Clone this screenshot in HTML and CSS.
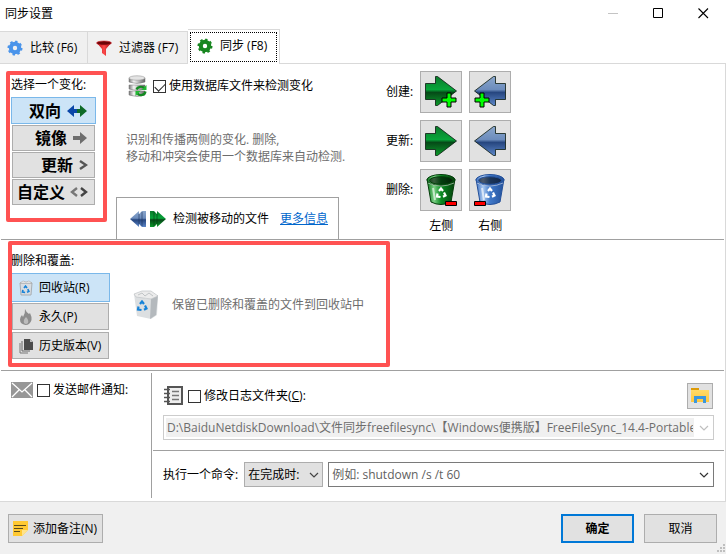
FILE: index.html
```html
<!DOCTYPE html>
<html lang="zh-CN">
<head>
    <meta charset="UTF-8">
    <meta name="viewport" content="width=device-width, initial-scale=1.0">
    <title>同步设置</title>
    <link rel="stylesheet" href="styles.css">
</head>
<body>
    <!-- shared icon shapes -->
    <svg class="defs" width="0" height="0" aria-hidden="true">
        <defs>
            <linearGradient id="green" x1="0" y1="0" x2="0" y2="1">
                <stop offset="0" stop-color="#0b7a2c"/>
                <stop offset="0.45" stop-color="#07a53a"/>
                <stop offset="0.55" stop-color="#064a18"/>
                <stop offset="1" stop-color="#0a9a2a"/>
            </linearGradient>
            <linearGradient id="blue" x1="0" y1="0" x2="0" y2="1">
                <stop offset="0" stop-color="#8aa6cc"/>
                <stop offset="0.45" stop-color="#6c8cbc"/>
                <stop offset="0.55" stop-color="#26467f"/>
                <stop offset="1" stop-color="#5c86c8"/>
            </linearGradient>
            <linearGradient id="green-bin" x1="0" y1="0" x2="1" y2="0">
                <stop offset="0" stop-color="#0a7a1c"/>
                <stop offset="0.25" stop-color="#7ccf85"/>
                <stop offset="0.5" stop-color="#0a8a22"/>
                <stop offset="1" stop-color="#04400c"/>
            </linearGradient>
            <linearGradient id="blue-bin" x1="0" y1="0" x2="1" y2="0">
                <stop offset="0" stop-color="#3a6fc0"/>
                <stop offset="0.25" stop-color="#a9c8f0"/>
                <stop offset="0.5" stop-color="#3f78c8"/>
                <stop offset="1" stop-color="#24529c"/>
            </linearGradient>
            <linearGradient id="metal" x1="0" y1="0" x2="1" y2="0">
                <stop offset="0" stop-color="#777"/>
                <stop offset="0.3" stop-color="#f4f4f4"/>
                <stop offset="1" stop-color="#666"/>
            </linearGradient>
            <linearGradient id="red" x1="0" y1="0" x2="1" y2="0">
                <stop offset="0" stop-color="#b00b14"/>
                <stop offset="0.5" stop-color="#ff4a4a"/>
                <stop offset="1" stop-color="#9c0810"/>
            </linearGradient>
            <linearGradient id="folder" x1="0" y1="0" x2="0" y2="1">
                <stop offset="0" stop-color="#ffdc6c"/>
                <stop offset="1" stop-color="#ffc83c"/>
            </linearGradient>
            <symbol id="gear" viewBox="0 0 16 16">
                <circle cx="8" cy="8" r="6" fill="none" stroke="currentColor" stroke-width="3" pathLength="16" stroke-dasharray="1 1"/>
                <circle cx="8" cy="8" r="4.200" fill="none" stroke="currentColor" stroke-width="4"/>
            </symbol>
            <symbol id="arrow" viewBox="0 0 34 32">
                <path d="M1.500 8.500H11.500V1.500H13.500L32.500 16L13.500 30.500H11.500V24.500H1.500Z" stroke="#0a1a10" stroke-opacity="0.800" stroke-linejoin="round"/>
            </symbol>
            <symbol id="plus" viewBox="0 0 16 16">
                <path d="M6 1h4v5h5v4h-5v5H6v-5H1V6h5z" fill="#0f0" stroke="#000"/>
            </symbol>
            <symbol id="recycle" viewBox="0 0 12 12">
                <path d="M4 4L6 1.500L8 4M9 5.500L10.500 8.500L8 9.800M5.500 10L2 9.500L2.500 6.500" fill="none" stroke="currentColor" stroke-width="2.200"/>
            </symbol>
            <symbol id="bucket" viewBox="0 0 32 34">
                <path d="M2 6L6 29Q16 34 26 29L30 6Z"/>
                <ellipse cx="16" cy="7" rx="14" ry="5.500"/>
                <ellipse cx="16" cy="7.500" rx="11.500" ry="3.800" fill="#000" fill-opacity="0.550"/>
                <path d="M3 10Q16 16 29 10" fill="none" stroke="#fff" stroke-opacity="0.500"/>
                <path d="M8 15L10 27" fill="none" stroke="#fff" stroke-opacity="0.600" stroke-width="2"/>
            </symbol>
            <symbol id="chevron" viewBox="0 0 10 6">
                <path d="M1 1L5 5L9 1" fill="none" stroke="currentColor" stroke-width="1.200"/>
            </symbol>
        </defs>
    </svg>

    <header class="titlebar">
        <h1>同步设置</h1>
        <div class="window-buttons">
            <button type="button" aria-label="最小化" disabled><svg width="11" height="11"><path d="M0 5.500h10" stroke="#c4c4c4"/></svg></button>
            <button type="button" aria-label="最大化"><svg width="11" height="11"><path d="M.5.5h9v9h-9z" fill="none" stroke="#000"/></svg></button>
            <button type="button" aria-label="关闭"><svg width="11" height="11"><path d="M.5.5l9.500 9.500M10 .5L.5 10" stroke="#000" stroke-width="1.100"/></svg></button>
        </div>
    </header>

    <nav class="tabs">
        <button type="button" class="tab tab-compare">
            <svg class="blue-gear" width="16" height="16"><use href="#gear"/></svg>
            比较 (F6)
        </button>
        <button type="button" class="tab tab-filter">
            <svg width="16" height="16" viewBox="0 0 16 16"><path d="M1 3L6 9V13L10 16V9L15 3Z" fill="url(#red)"/><ellipse cx="8" cy="3" rx="7.500" ry="2" fill="#6d0508" stroke="#d8232a" stroke-width=".6"/></svg>
            过滤器 (F7)
        </button>
        <button type="button" class="tab tab-sync active">
            <span class="focus">
                <svg class="green-gear" width="16" height="16"><use href="#gear"/></svg>
                同步 (F8)
            </span>
        </button>
    </nav>

    <main class="page">
        <section class="sync">
            <div class="variants">
                <div class="group-label">选择一个变化:</div>
                <button type="button" class="variant selected">双向
                    <svg width="22" height="14" viewBox="0 0 22 14"><path d="M11 5H8V1L1 7L8 13V9H11Z" fill="#0a46a8"/><path d="M11 5h3V1l7 6l-7 6V9h-3Z" fill="#0d6b28"/></svg>
                </button>
                <button type="button" class="variant">镜像
                    <svg width="16" height="14" viewBox="0 0 16 14"><path d="M1 5h7V1l7 6l-7 6V9H1Z" fill="#6e6e6e"/></svg>
                </button>
                <button type="button" class="variant">更新
                    <svg width="10" height="14" viewBox="0 0 10 14"><path d="M2 3L8 7L2 11" fill="none" stroke="#555" stroke-width="2.400"/></svg>
                </button>
                <button type="button" class="variant">自定义
                    <svg width="18" height="14" viewBox="0 0 18 14"><path d="M7 3L2 7L7 11" fill="none" stroke="#777" stroke-width="2.400"/><path d="M11 3L16 7L11 11" fill="none" stroke="#444" stroke-width="2.400"/></svg>
                </button>
            </div>

            <div class="detect">
                <div class="database">
                    <svg width="20" height="22" viewBox="0 0 20 22">
                        <path d="M1 3v4q8 3 16 0V3zM1 10v4q8 3 16 0v-4zM1 16v4q8 3 16 0v-4z" fill="url(#metal)" stroke="#777" stroke-width=".5"/>
                        <ellipse cx="9" cy="3" rx="8" ry="2.200" fill="#e4e4e4" stroke="#999" stroke-width=".6"/>
                        <path d="M8.500 14.500a4.500 4 0 0 1 8-1M17.500 16.500a4.500 4 0 0 1-8 2" fill="none" stroke="#128a20" stroke-width="2.200"/>
                        <path d="M18.500 10v5h-5zM7.500 21v-5h5z" fill="#22b934"/>
                    </svg>
                    <input type="checkbox" id="use-db" checked>
                    <label for="use-db">使用数据库文件来检测变化</label>
                </div>
                <p class="hint">识别和传播两侧的变化. 删除,<br>移动和冲突会使用一个数据库来自动检测.</p>
                <div class="moved">
                    <svg width="36" height="18" viewBox="0 0 36 18">
                        <path d="M9 1L0 9l9 8V14l3 3h4V1h-4L9 4Z" fill="url(#blue)"/>
                        <path d="M9 4V14M12 2V16" stroke="#1c335c" stroke-opacity=".6"/>
                        <path d="M27 1l9 8l-9 8V14l-3 3h-4V1h4l3 3Z" fill="url(#green)"/>
                        <path d="M27 4V14M24 2V16" stroke="#043d10" stroke-opacity=".6"/>
                    </svg>
                    <span>检测被移动的文件</span>
                    <a href="#more">更多信息</a>
                </div>
            </div>

            <div class="actions">
                <span class="action-label">创建:</span>
                <button type="button" class="action" aria-label="创建左侧">
                    <svg width="34" height="34" viewBox="0 0 34 34"><use href="#arrow" width="34" height="32" fill="url(#green)"/><use href="#plus" x="17" y="17" width="16" height="16"/></svg>
                </button>
                <button type="button" class="action" aria-label="创建右侧">
                    <svg width="34" height="34" viewBox="0 0 34 34"><g transform="matrix(-1 0 0 1 34 0)"><use href="#arrow" width="34" height="32" fill="url(#blue)"/></g><use href="#plus" x="1" y="17" width="16" height="16"/></svg>
                </button>
                <span class="action-label">更新:</span>
                <button type="button" class="action" aria-label="更新左侧">
                    <svg width="34" height="34" viewBox="0 0 34 34"><use href="#arrow" width="34" height="34" fill="url(#green)"/></svg>
                </button>
                <button type="button" class="action" aria-label="更新右侧">
                    <svg width="34" height="34" viewBox="0 0 34 34"><g transform="matrix(-1 0 0 1 34 0)"><use href="#arrow" width="34" height="34" fill="url(#blue)"/></g></svg>
                </button>
                <span class="action-label">删除:</span>
                <button type="button" class="action" aria-label="删除左侧">
                    <svg width="34" height="34" viewBox="0 0 34 34">
                        <use href="#bucket" x="1" width="32" height="34" fill="url(#green-bin)" stroke="#043d0b"/>
                        <use href="#recycle" class="white" x="11" y="14" width="12" height="12"/>
                        <path d="M21.500 28.500h11v4h-11z" fill="#f00" stroke="#000"/>
                    </svg>
                </button>
                <button type="button" class="action" aria-label="删除右侧">
                    <svg width="34" height="34" viewBox="0 0 34 34">
                        <use href="#bucket" x="1" width="32" height="34" fill="url(#blue-bin)" stroke="#24509a"/>
                        <use href="#recycle" class="white" x="11" y="14" width="12" height="12"/>
                        <path d="M1.500 28.500h11v4h-11z" fill="#f00" stroke="#000"/>
                    </svg>
                </button>
                <span></span>
                <span class="side">左侧</span>
                <span class="side">右侧</span>
            </div>
            <div class="mark mark-variants"></div>
        </section>

        <section class="deletion">
            <div class="methods">
                <div class="group-label">删除和覆盖:</div>
                <button type="button" class="method selected">
                    <svg width="14" height="16" viewBox="0 0 14 16"><path d="M1 3L2 15H12L13 3Z" fill="#d8dde2" stroke="#a8adb2"/><path d="M1 3L4 1L7 2L10 1L13 3Z" fill="#fff" stroke="#aaa" stroke-width=".7"/><use href="#recycle" class="recycle-blue" x="2" y="5" width="9" height="9"/></svg>
                    回收站(R)
                </button>
                <button type="button" class="method">
                    <svg width="14" height="16" viewBox="0 0 14 16"><path d="M6 0Q7 3 10 5L11 4Q13 8 12.500 11Q11 16 6.500 16Q1 15 1 10.500Q1 8 3 6L4 8Q6.500 4 6 0Z" fill="#8d8d8d"/><path d="M7 8Q10 11 9 14Q7 16 5 14Q4 11 7 8Z" fill="#bcbcbc"/></svg>
                    永久(P)
                </button>
                <button type="button" class="method">
                    <svg width="14" height="16" viewBox="0 0 14 16"><path d="M1 5V15H9" fill="none" stroke="#777"/><path d="M3 3V13H11" fill="none" stroke="#666"/><path d="M5 1H11L14 4V12H5Z" fill="#4c4c4c"/><path d="M11 1V4H14Z" fill="#bbb"/></svg>
                    历史版本(V)
                </button>
            </div>
            <div class="method-info">
                <svg width="26" height="30" viewBox="0 0 26 30">
                    <path d="M1 4L4 26L18 29L24 25L25 6L14 9Z" fill="#dcdfe1"/>
                    <path d="M18 9L25 5L23 25L17 29Z" fill="#b4b9bd"/>
                    <path d="M1 4L9 1L18 1L25 6L18 9L3 7Z" fill="#ececec" stroke="#bfc3c6" stroke-width=".7"/>
                    <path d="M5 5L9 3L12 6L16 3L20 6" fill="none" stroke="#c0c4c6"/>
                    <use href="#recycle" class="recycle-blue" x="3" y="10" width="12" height="12"/>
                </svg>
                <span>保留已删除和覆盖的文件到回收站中</span>
            </div>
            <div class="mark mark-deletion"></div>
        </section>

        <section class="extras">
            <div class="email">
                <svg width="22" height="16" viewBox="0 0 22 16"><path d="M0 0h22v16H0z" fill="#979797"/><path d="M1 1L11 10L21 1M1 15L8 8M21 15L14 8" fill="none" stroke="#fff" stroke-width="1.300"/></svg>
                <input type="checkbox" id="email">
                <label for="email">发送邮件通知:</label>
            </div>
            <div class="options">
                <div class="log">
                    <div class="log-head">
                        <svg width="20" height="20" viewBox="0 0 20 20"><path d="M4 1h14v17H4z" fill="#eee" stroke="#555" stroke-width="2"/><path d="M8 5.500h7M8 9.500h7M8 13.500h7" stroke="#777" stroke-width="1.500"/><path d="M0 3.500h6M0 7.500h6M0 11.500h6M0 15.500h6" stroke="#555" stroke-width="1.600"/></svg>
                        <input type="checkbox" id="log">
                        <label for="log">修改日志文件夹(<u>C</u>):</label>
                        <button type="button" class="browse" aria-label="浏览">
                            <svg width="18" height="16" viewBox="0 0 18 16"><path d="M0 1h8v1h10v12H0z" fill="url(#folder)"/><path d="M0 0h8v2H0z" fill="#dd9b08"/><path d="M3 15V8h12v7h-3v-4H6v4z" fill="#3b97dd"/></svg>
                        </button>
                    </div>
                    <div class="combo disabled">
                        <input type="text" aria-label="日志文件夹" value="D:\BaiduNetdiskDownload\文件同步freefilesync\【Windows便携版】FreeFileSync_14.4-Portable" disabled>
                        <button type="button" aria-label="展开日志文件夹" disabled><svg width="10" height="6"><use href="#chevron"/></svg></button>
                    </div>
                </div>
                <div class="command">
                    <label for="when">执行一个命令:</label>
                    <div class="select">
                        <select id="when"><option>在完成时:</option></select>
                        <svg width="10" height="6"><use href="#chevron"/></svg>
                    </div>
                    <div class="combo">
                        <input type="text" aria-label="命令" placeholder="例如: shutdown /s /t 60">
                        <button type="button" aria-label="展开命令"><svg width="10" height="6"><use href="#chevron"/></svg></button>
                    </div>
                </div>
            </div>
        </section>
    </main>

    <footer class="footer">
        <button type="button" class="note">
            <svg width="15" height="15" viewBox="0 0 15 15"><path d="M0 0h15v9l-6 6H0z" fill="#ffc933"/><path d="M9 15V9h6z" fill="#ffe38a"/><path d="M1 4.500h12M1 7.500h9M1 10.500h6" stroke="#5a4b1d"/></svg>
            添加备注(N)
        </button>
        <button type="button" class="ok">确定</button>
        <button type="button" class="cancel">取消</button>
        <svg class="grip" width="8" height="8"><path d="M6 0h2v2H6zM3 3h2v2H3zM6 3h2v2H6zM0 6h2v2H0zM3 6h2v2H3zM6 6h2v2H6z" fill="#bfbfbf"/></svg>
    </footer>
</body>
</html>
```
FILE: styles.css
```css
* {
    box-sizing: border-box;
}
body {
    margin: 0;
    min-height: 100vh;
    display: flex;
    flex-direction: column;
    background: #fff;
    color: #000;
    font-family: "Open Sans", "Noto Sans CJK SC", sans-serif;
    font-size: 12px;
    line-height: 16px;
}
svg {
    display: block;
    flex: none;
}
.defs {
    position: absolute;
}
button, input, select {
    font: inherit;
    color: inherit;
    margin: 0;
}
button {
    border: 1px solid #adadad;
    background: #e1e1e1;
    padding: 0;
}
input[type="checkbox"] {
    appearance: none;
    flex: none;
    width: 13px;
    height: 13px;
    border: 1px solid #333;
    background: #fff;
}
input[type="checkbox"]:checked::before {
    content: "";
    display: block;
    width: 9px;
    height: 5px;
    margin: 2px 1px;
    border-left: 1px solid #222;
    border-bottom: 1px solid #222;
    transform: rotate(-45deg);
}

/* title bar */
.titlebar {
    display: flex;
    justify-content: space-between;
    height: 29px;
    padding-left: 5px;
}
.titlebar h1 {
    margin: 0;
    padding-top: 6px;
    font-size: 12px;
    font-weight: normal;
}
.window-buttons {
    display: flex;
}
.window-buttons button {
    display: flex;
    align-items: center;
    justify-content: center;
    width: 45px;
    height: 27px;
    border: 0;
    background: none;
}

/* tabs */
.tabs {
    display: flex;
    align-items: flex-end;
    border-bottom: 1px solid #d9d9d9;
}
.tab {
    display: flex;
    align-items: center;
    height: 32px;
    gap: 7px;
    padding-left: 7px;
    border: 1px solid #d9d9d9;
    border-width: 1px 1px 0 0;
    background: #f0f0f0;
}
.tab-compare {
    width: 88px;
}
.tab-filter {
    width: 100px;
    padding-left: 8px;
}
.tab.active {
    width: 92px;
    height: 35px;
    padding: 2px;
    margin-bottom: -1px;
    background: #fff;
}
.focus {
    display: flex;
    align-items: center;
    gap: 7px;
    width: 100%;
    height: 30px;
    padding: 0 0 2px 6px;
    border: 1px dotted #000;
}
.blue-gear {
    color: #4a94ea;
}
.green-gear {
    color: #17861f;
}

/* page */
.page {
    flex: 1;
    padding: 0 1px;
    border-right: 1px solid #d9d9d9;
    border-bottom: 1px solid #d9d9d9;
}
.sync, .deletion {
    position: relative;
    display: flex;
    border-bottom: 1px solid #a0a0a0;
}
.group-label {
    margin-bottom: 4px;
}
.selected {
    border-color: #7ab8ea;
    background: #cce4f7;
}
.mark {
    position: absolute;
    border: 4px solid #ff5252;
    border-radius: 2px;
    pointer-events: none;
}

/* sync variants */
.sync {
    height: 176px;
}
.variants {
    display: flex;
    flex-direction: column;
    width: 115px;
    padding: 13px 20px 0 10px;
}
.variant {
    display: flex;
    align-items: center;
    justify-content: flex-end;
    gap: 5px;
    height: 26px;
    margin: 0 1px 1px;
    padding-right: 6px;
    font-size: 16px;
    font-weight: bold;
}
.variant.selected {
    height: 27px;
    margin: 0 0 1px;
    padding-right: 7px;
}
.mark-variants {
    top: 7px;
    left: 5px;
    width: 101px;
    height: 151px;
}
.detect {
    display: flex;
    flex-direction: column;
    width: 223px;
}
.database {
    display: flex;
    align-items: center;
    padding: 11px 0 0 12px;
}
.database input {
    margin: 0 3px 0 5px;
}
.hint {
    margin: 34px 0 0 10px;
    line-height: 17px;
    color: #6d6d6d;
    white-space: nowrap;
}
.moved {
    display: flex;
    align-items: center;
    height: 42px;
    margin-top: auto;
    padding-left: 13px;
    border: 1px solid #a0a0a0;
    border-bottom: 0;
}
.moved span {
    margin: 0 11px 0 7px;
}
a {
    color: #0066cc;
}
.actions {
    display: grid;
    grid-template-columns: auto 42px 42px;
    gap: 7px;
    align-content: start;
    align-items: center;
    margin-left: 47px;
    padding-top: 7px;
}
.action {
    display: flex;
    align-items: center;
    justify-content: center;
    height: 42px;
}
.side {
    text-align: center;
}
.white {
    color: #fff;
}
.recycle-blue {
    color: #1683d8;
}

/* deletion */
.deletion {
    height: 131px;
}
.methods {
    display: flex;
    flex-direction: column;
    width: 120px;
    padding: 13px 11px 0 10px;
}
.method {
    display: flex;
    align-items: center;
    gap: 6px;
    height: 27px;
    margin: 0 1px 2px;
    padding-left: 6px;
    white-space: nowrap;
}
.method.selected {
    height: 29px;
    margin: 0 0 1px;
    padding-left: 7px;
}
.method-info {
    display: flex;
    align-items: center;
    gap: 13px;
    padding-left: 12px;
    color: #6d6d6d;
}
.mark-deletion {
    top: 1px;
    left: 7px;
    width: 382px;
    height: 126px;
}

/* notification, log, command */
.extras {
    display: flex;
}
.email {
    display: flex;
    align-items: center;
    align-self: flex-start;
    width: 150px;
    padding: 11px 0 0 10px;
}
.email input, .log-head input {
    margin: 0 3px 0 4px;
}
.options {
    flex: 1;
    min-width: 0;
    margin: 2px 0 3px;
    border-left: 1px solid #a0a0a0;
}
.log {
    margin-left: 1px;
    padding: 10px;
    border-bottom: 1px solid #a0a0a0;
}
.log-head {
    display: flex;
    align-items: center;
    margin-bottom: 6px;
    padding: 0 1px;
}
.browse {
    display: flex;
    align-items: center;
    justify-content: center;
    width: 26px;
    height: 26px;
    margin-left: auto;
}
.combo {
    display: flex;
    flex: 1;
    height: 25px;
    border: 1px solid #7a7a7a;
    background: #fff;
}
.combo input {
    flex: 1;
    min-width: 0;
    border: 0;
    margin: 2px 0;
    padding: 0 3px;
    background: none;
}
.combo input::placeholder {
    color: #5f5f5f;
    opacity: 1;
}
.combo button {
    display: flex;
    align-items: center;
    justify-content: center;
    width: 19px;
    border: 0;
    background: none;
    color: #333;
}
.combo.disabled {
    border-color: #ccc;
}
.combo.disabled input {
    margin-left: 2px;
    padding: 0 1px;
    background: #f0f0f0;
    color: #6d6d6d;
}
.combo.disabled button {
    color: #bfbfbf;
}
.command {
    display: flex;
    align-items: center;
    padding: 11px 10px 11px 11px;
}
.select {
    position: relative;
    margin: 0 5px 0 6px;
}
.select select {
    appearance: none;
    display: block;
    width: 79px;
    height: 25px;
    padding: 0 3px;
    border: 1px solid #adadad;
    border-radius: 0;
    background: #e1e1e1;
}
.select svg {
    position: absolute;
    top: 10px;
    right: 4px;
    color: #444;
    pointer-events: none;
}

/* footer */
.footer {
    position: relative;
    display: flex;
    gap: 10px;
    padding: 12px 9px 11px 8px;
    background: #f0f0f0;
}
.footer button {
    width: 73px;
    height: 29px;
}
.footer .note {
    display: flex;
    align-items: center;
    gap: 5px;
    width: 95px;
    margin-right: auto;
    padding-left: 4px;
    white-space: nowrap;
}
.footer .ok {
    border: 2px solid #0078d7;
    font-weight: bold;
}
.grip {
    position: absolute;
    right: 1px;
    bottom: 2px;
}
```
